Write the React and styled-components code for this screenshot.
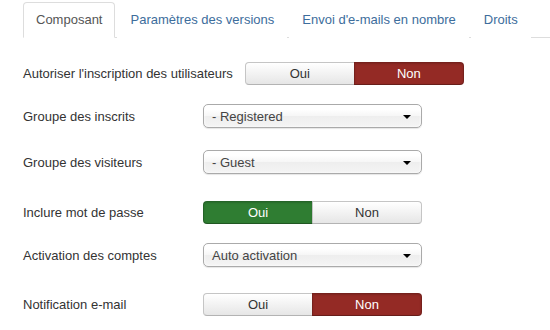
import React from 'react';
import styled, { createGlobalStyle } from 'styled-components';

const Global = createGlobalStyle`
  body {
    margin: 0;
    background: #fff;
    font-family: "Liberation Sans", Arial, sans-serif;
    font-size: 13px;
    color: #333;
  }
`;

const Page = styled.div`
  padding: 2px 0 0 23px;
`;

const Tabs = styled.ul`
  display: flex;
  margin: 0;
  padding: 0;
  list-style: none;
  border-bottom: 1px solid #ddd;
`;

const Tab = styled.li`
  margin-right: 2px;
  margin-bottom: -1px;
  padding: 8px 12px;
  line-height: 18px;
  border: 1px solid ${p => (p.active ? '#ddd' : 'transparent')};
  border-bottom-color: ${p => (p.active ? '#fff' : 'transparent')};
  border-radius: 4px 4px 0 0;
  background: #fff;
  color: ${p => (p.active ? '#555' : '#3d6d9c')};
  cursor: pointer;
`;

const Form = styled.div`
  padding-top: 24px;
`;

const Row = styled.div`
  display: flex;
  align-items: center;
  margin-top: ${p => p.space || 0}px;
`;

const Label = styled.label`
  min-width: 180px;
  padding-right: 12px;
  box-sizing: border-box;
  white-space: nowrap;
  color: #333;
`;

const Toggle = styled.div`
  display: flex;
  width: 219px;
  height: 23px;
`;

const ToggleBtn = styled.div`
  flex: 1;
  display: flex;
  align-items: center;
  justify-content: center;
  font-size: 13px;
  border: 1px solid ${p => (p.on ? 'rgba(0,0,0,0.2)' : '#c5c5c5')};
  border-bottom-color: ${p => (p.on ? 'rgba(0,0,0,0.3)' : '#b3b3b3')};
  color: ${p => (p.on ? '#fff' : '#333')};
  background: ${p =>
    p.on === 'red'
      ? '#942a25'
      : p.on === 'green'
      ? '#2f7d32'
      : 'linear-gradient(#ffffff, #e6e6e6)'};
  box-shadow: ${p => (p.on ? 'inset 0 1px 2px rgba(0,0,0,0.15)' : 'inset 0 1px 0 rgba(255,255,255,0.2)')};
  &:first-child {
    border-radius: 4px 0 0 4px;
  }
  &:last-child {
    border-radius: 0 4px 4px 0;
    margin-left: -1px;
  }
`;

const Select = styled.div`
  display: flex;
  align-items: center;
  justify-content: space-between;
  width: 219px;
  height: 24px;
  box-sizing: border-box;
  padding: 0 10px 0 8px;
  border: 1px solid #aaa;
  border-radius: 5px;
  background: linear-gradient(#ffffff 20%, #f6f6f6 50%, #eeeeee 52%, #f4f4f4 100%);
  box-shadow: 0 0 3px #fff inset, 0 1px 1px rgba(0,0,0,0.1);
  color: #444;
`;

const Caret = styled.span`
  width: 0;
  height: 0;
  border-left: 4px solid transparent;
  border-right: 4px solid transparent;
  border-top: 4px solid #000;
  margin-top: 2px;
`;

function YesNo({ value }) {
  return (
    <Toggle>
      <ToggleBtn on={value === 'oui' ? 'green' : undefined}>Oui</ToggleBtn>
      <ToggleBtn on={value === 'non' ? 'red' : undefined}>Non</ToggleBtn>
    </Toggle>
  );
}

function Dropdown({ children }) {
  return (
    <Select>
      <span>{children}</span>
      <Caret />
    </Select>
  );
}

export default function App() {
  return (
    <Page>
      <Global />
      <Tabs>
        <Tab active>Composant</Tab>
        <Tab>Paramètres des versions</Tab>
        <Tab>Envoi d'e-mails en nombre</Tab>
        <Tab>Droits</Tab>
      </Tabs>
      <Form>
        <Row>
          <Label>Autoriser l'inscription des utilisateurs</Label>
          <YesNo value="non" />
        </Row>
        <Row space={19}>
          <Label>Groupe des inscrits</Label>
          <Dropdown>- Registered</Dropdown>
        </Row>
        <Row space={22}>
          <Label>Groupe des visiteurs</Label>
          <Dropdown>- Guest</Dropdown>
        </Row>
        <Row space={27}>
          <Label>Inclure mot de passe</Label>
          <YesNo value="oui" />
        </Row>
        <Row space={19}>
          <Label>Activation des comptes</Label>
          <Dropdown>Auto activation</Dropdown>
        </Row>
        <Row space={26}>
          <Label>Notification e-mail</Label>
          <YesNo value="non" />
        </Row>
      </Form>
    </Page>
  );
}
